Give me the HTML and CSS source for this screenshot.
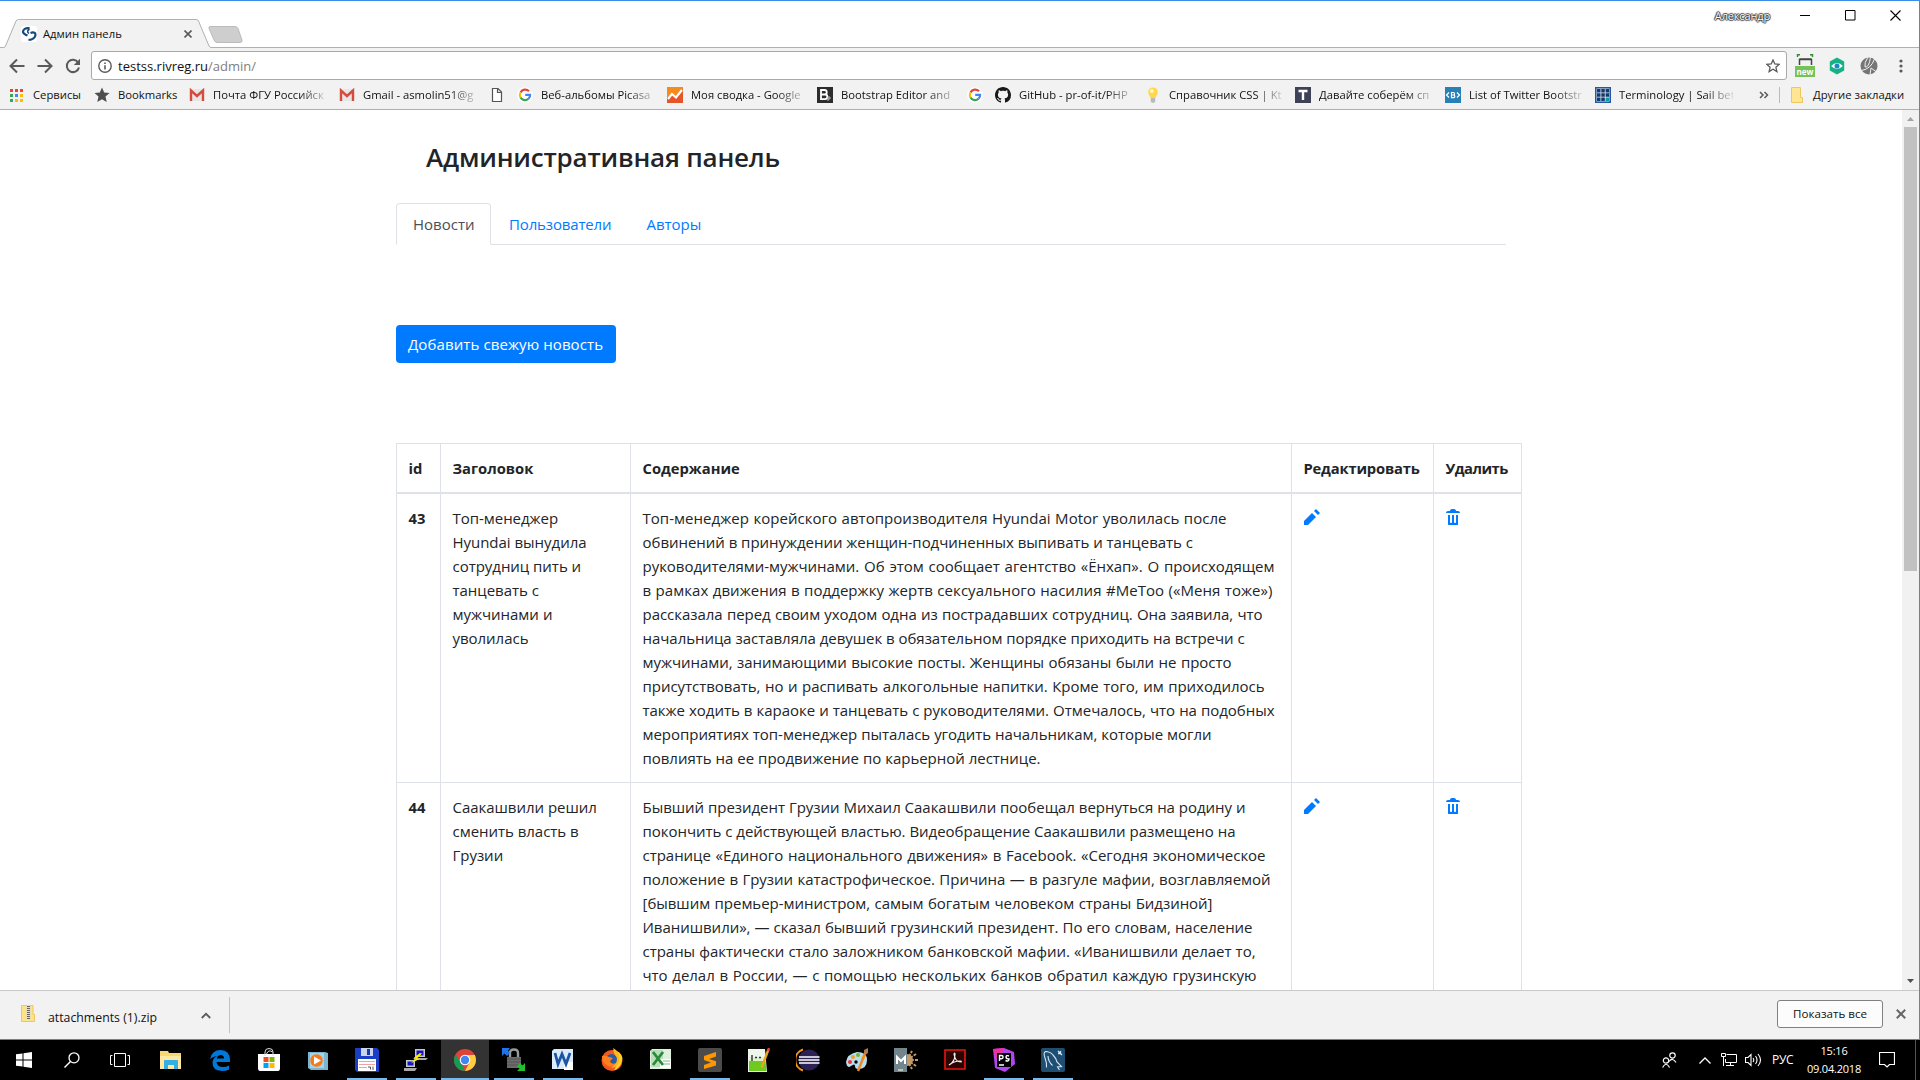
FILE: index.html
```html
<!DOCTYPE html>
<html lang="ru">
<head>
<meta charset="utf-8">
<title>Админ панель</title>
<link rel="stylesheet" href="styles.css">
</head>
<body>
<div class="window">
  <header class="tabstrip">
    <div class="tab">
      <svg class="tab-shape" width="212" height="29"><path d="M0 28.500H3.500Q5 28.500 5.500 27L16 2Q17 .5 18.500 .5H196Q198 .5 198.500 2L209 27Q209.500 28.500 212 28.500V29H0z" fill="#f2f2f2"/><path d="M0 28.500H3.500Q5 28.500 5.500 27L16 2Q17 .5 18.500 .5H196Q198 .5 198.500 2L209 27Q209.500 28.500 212 28.500" fill="none" stroke="#b0b0b0"/></svg>
      <svg class="fav" width="16" height="16" viewBox="0 0 16 16"><rect width="16" height="16" rx="2" fill="#fff"/><path d="M8.500 2.200C4.500 1.500 2 3.500 2 5.800S4.500 8.500 6.500 9.500M7.500 14c4.500-.5 7-3 7-5.300S12 6 9.500 7" fill="none" stroke="#174a7c" stroke-width="2.200"/><path d="M8.500 3C6.200 4.500 6 6 8 7.500" fill="none" stroke="#174a7c" stroke-width="1.500"/></svg>
      <span class="tab-title">Админ панель</span>
      <svg class="tab-close" width="8" height="8"><path d="M.5 .5l7 7M7.500 .5l-7 7" stroke="#5a5a5a" stroke-width="1.600"/></svg>
    </div>
    <svg class="newtab" width="36" height="18"><path d="M2 .5H27Q29 .5 30 2.500L34 14Q34.500 16.500 32 16.500H9Q7 16.500 6 14L1 2.500Q.5 .5 2 .5z" fill="#cecece" stroke="#bbb"/></svg>
    <span class="user">Александр</span>
    <div class="winbtns">
      <svg width="11" height="11"><path d="M0 5.500h10" stroke="#000"/></svg>
      <svg width="11" height="11"><path d="M.5 .5h9.500v9.500h-9.500z" fill="none" stroke="#000"/></svg>
      <svg width="11" height="11"><path d="M.5 .5l10 10M10.500 .5l-10 10" stroke="#000" stroke-width="1.100"/></svg>
    </div>
  </header>

  <div class="toolbar">
    <svg width="16" height="16" viewBox="0 0 16 16"><path d="M15.500 8H2M8 1.500L1.500 8 8 14.500" class="nav-i"/></svg>
    <svg width="16" height="16" viewBox="0 0 16 16"><path d="M.5 8H14M8 1.500L14.500 8 8 14.500" class="nav-i"/></svg>
    <svg width="16" height="16" viewBox="0 0 16 16"><path d="M13.200 4.500A6.200 6.200 0 1 0 14 9.500" class="nav-i"/><path d="M15 .8V7H8.800z" fill="#5a5a5a"/></svg>
    <div class="omnibox">
      <svg width="14" height="14" viewBox="0 0 14 14"><circle cx="7" cy="7" r="6.200" fill="none" stroke="#5a5a5a" stroke-width="1.400"/><path d="M7 6.200v4.300M7 3.400v1.500" stroke="#5a5a5a" stroke-width="1.600"/></svg>
      <span class="url">testss.rivreg.ru<span class="path">/admin/</span></span>
      <svg class="star" width="14" height="14" viewBox="0 0 14 14"><path d="M7 1l1.800 4 4.400.4-3.300 2.900 1 4.300L7 10.300l-3.900 2.300 1-4.300L.8 5.400 5.200 5z" fill="none" stroke="#5a5a5a" stroke-width="1.300"/></svg>
    </div>
    <div class="exts">
      <div class="ext-new"><svg width="18" height="11"><path d="M1.500 3V.8H4M14 .8h2.500V3" fill="none" stroke="#2e8b2e" stroke-width="1.400"/><path d="M3.500 11V5.500h12V11M3.500 5h12" fill="none" stroke="#444" stroke-width="1.500"/></svg><b>new</b></div>
      <svg width="18" height="18" viewBox="0 0 18 20"><path d="M9 .5L17 5v10l-8 4.500L1 15V5z" fill="#16b285"/><path d="M2.500 10Q9 3.500 15.500 10 9 16.500 2.500 10z" fill="#fff"/><circle cx="9" cy="10" r="2.800" fill="#1c86c9"/></svg>
      <svg width="18" height="18" viewBox="0 0 18 18"><circle cx="9" cy="9" r="8.500" fill="#757575"/><path d="M8 0Q4 6 5 10q4 1 5.500-10M1.500 13.500Q11 12 14.500 2M10 18l1-7 5.500 4" fill="none" stroke="#f2f2f2"/></svg>
      <svg width="4" height="16"><g fill="#5a5a5a"><circle cx="2" cy="3" r="1.600"/><circle cx="2" cy="8" r="1.600"/><circle cx="2" cy="13" r="1.600"/></g></svg>
    </div>
  </div>

  <nav class="bookmarks">
    <div class="bm apps"><svg width="16" height="16"><path d="M2 2h3v3H2zM7 2h3v3H7zM12 2h3v3h-3z" fill="#ea4335"/><path d="M2 7h3v3H2z" fill="#34a853"/><path d="M7 7h3v3H7z" fill="#4285f4"/><path d="M12 7h3v3h-3zM7 12h3v3H7zM12 12h3v3h-3z" fill="#fbbc05"/><path d="M2 12h3v3H2z" fill="#34a853"/></svg><span>Сервисы</span></div>
    <div class="bm marks"><svg width="16" height="16" viewBox="0 0 16 16"><path d="M8 .5l2.200 5 5.300.5-4 3.600 1.200 5.400L8 12.200 3.300 15l1.200-5.400L.5 6l5.300-.5z" fill="#4e4e4e"/></svg><span>Bookmarks</span></div>
    <div class="bm"><svg width="16" height="16"><path d="M1 2h14v12H1z" fill="#e6e6e6"/><path d="M2 14V3.500l6 5.500 6-5.500V14" fill="none" stroke="#d54b3d" stroke-width="2.400"/></svg><span class="fade">Почта ФГУ Российск</span></div>
    <div class="bm"><svg width="16" height="16"><path d="M1 2h14v12H1z" fill="#e6e6e6"/><path d="M2 14V3.500l6 5.500 6-5.500V14" fill="none" stroke="#d54b3d" stroke-width="2.400"/></svg><span class="fade">Gmail - asmolin51@g</span></div>
    <div class="bm icon-only"><svg width="16" height="16"><path d="M3.500 1.500h5.500l3.500 3.500v9.500h-9zM8.500 1.500v4h4" fill="#fff" stroke="#555" stroke-width="1.200"/></svg></div>
    <div class="bm"><svg width="16" height="16" viewBox="0 0 16 16"><use href="#g"/></svg><span class="fade">Веб-альбомы Picasa</span></div>
    <div class="bm"><svg width="16" height="16"><path d="M0 0h16v16H0z" fill="#f58a1f"/><path d="M0 16v-5l5-4 4 3 7-8v14z" fill="#e4562a"/><path d="M1 12l4-5 4 3.500L15 3" fill="none" stroke="#fff" stroke-width="2.200"/></svg><span class="fade">Моя сводка - Google</span></div>
    <div class="bm"><svg width="16" height="16"><path d="M0 0h16v16H0z" fill="#2c2c2e"/><path d="M4 3h3.500a2 2 0 0 1 0 4.500H4zM4 7.500h4a2.300 2.300 0 0 1 0 4.700H4z" fill="none" stroke="#fff" stroke-width="1.800"/><path d="M11 14v-4h2v2h-2" fill="none" stroke="#bbb"/></svg><span class="fade">Bootstrap Editor and</span></div>
    <div class="bm icon-only"><svg width="16" height="16" viewBox="0 0 16 16"><g id="g"><circle cx="8" cy="8" r="7.800" fill="#fff"/><g fill="none" stroke-width="2.200"><path d="M12 4.300A5.200 5.200 0 0 0 3.500 5.500" stroke="#ea4335"/><path d="M3.500 5.500a5.200 5.200 0 0 0 0 5" stroke="#fbbc05"/><path d="M3.500 10.500a5.200 5.200 0 0 0 8 1.300" stroke="#34a853"/><path d="M11.500 11.800Q13.300 10 13.100 7.900H8.200" stroke="#4285f4"/></g></g></svg></div>
    <div class="bm"><svg width="16" height="16" viewBox="0 0 16 16"><path d="M8 0C3.580 0 0 3.580 0 8c0 3.540 2.290 6.530 5.470 7.590.4.070.55-.17.55-.38 0-.19-.01-.82-.01-1.490-2.010.37-2.530-.49-2.690-.94-.09-.23-.48-.94-.82-1.130-.28-.15-.68-.52-.01-.53.63-.01 1.080.58 1.230.82.72 1.210 1.870.87 2.330.66.070-.52.28-.87.51-1.070-1.780-.2-3.640-.89-3.640-3.950 0-.87.31-1.590.82-2.150-.08-.2-.36-1.020.08-2.120 0 0 .67-.21 2.200.82.64-.18 1.320-.27 2-.27s1.360.09 2 .27c1.530-1.040 2.200-.82 2.200-.82.44 1.100.16 1.920.08 2.120.51.56.82 1.270.82 2.150 0 3.070-1.870 3.750-3.650 3.950.29.25.54.73.54 1.480 0 1.070-.01 1.930-.01 2.200 0 .21.15.46.55.38A8.010 8.010 0 0 0 16 8c0-4.420-3.580-8-8-8z" fill="#191717"/></svg><span class="fade">GitHub - pr-of-it/PHP</span></div>
    <div class="bm"><svg width="16" height="16"><path d="M8 .5c3 0 4.800 2 4.800 4.700 0 2.500-2 3.400-2.300 5.800h-5C5.200 8.600 3.200 7.700 3.200 5.200 3.200 2.500 5 .5 8 .5z" fill="#ffd84a"/><circle cx="6.800" cy="4" r="2" fill="#fff6c0"/><path d="M5.800 11h4.400v3.500l-1 1.200H6.800l-1-1.200z" fill="#b9b9b9"/></svg><span class="fade">Справочник CSS | Kt</span></div>
    <div class="bm"><svg width="16" height="16"><path d="M0 0h16v16H0z" fill="#3d4257"/><path d="M3.500 4h9M8 4v9" stroke="#fff" stroke-width="2.400"/></svg><span class="fade">Давайте соберём сп</span></div>
    <div class="bm"><svg width="16" height="16"><path d="M0 0h16v16H0z" fill="#2980b9"/><path d="M4 5.500L1.500 8 4 10.500M12 5.500L14.500 8 12 10.500M6.500 5.500h1.800a1 1 0 0 1 0 2.500H6.500zM6.500 8h2a1 1 0 0 1 0 2.600h-2z" fill="none" stroke="#fff" stroke-width="1.200"/></svg><span class="fade">List of Twitter Bootstr</span></div>
    <div class="bm"><svg width="16" height="16"><path d="M0 0h16v16H0z" fill="#2457a8"/><path d="M1.500 1.500h13v13h-13z" fill="#dfe6ee"/><path d="M2 2h3.500v3.500H2zM6.300 2h3.500v3.500H6.300zM10.600 2h3.500v3.500h-3.500zM2 6.300h3.500v3.500H2zM6.300 6.300h3.500v3.500H6.300zM10.600 6.300h3.500v3.500h-3.500zM2 10.600h3.500v3.500H2zM6.300 10.600h3.500v3.500H6.300z" fill="#123a6b"/><path d="M10.600 10.600h3.500v3.500h-3.500z" fill="#109a9a"/></svg><span class="fade">Terminology | Sail bet</span></div>
    <svg class="more" width="10" height="8"><path d="M1 1l3 3-3 3M5.500 1l3 3-3 3" fill="none" stroke="#5a5a5a" stroke-width="1.500"/></svg>
    <i class="bm-sep"></i>
    <div class="bm other"><svg width="16" height="16"><path d="M2.500 .5h9v10h2v5H2.500z" fill="#ffe693" stroke="#efc75c"/></svg><span>Другие закладки</span></div>
  </nav>

  <div class="viewport">
    <main class="page">
      <h1>Административная панель</h1>
      <ul class="tabs"><li class="active">Новости</li><li class="users">Пользователи</li><li>Авторы</li></ul>
      <a class="btn">Добавить свежую новость</a>
      <table>
        <colgroup><col class="c-id"><col class="c-title"><col class="c-text"><col class="c-edit"><col class="c-del"></colgroup>
        <thead><tr><th>id</th><th>Заголовок</th><th>Содержание</th><th class="h-edit">Редактировать</th><th class="h-del">Удалить</th></tr></thead>
        <tbody>
          <tr>
            <th>43</th>
            <td class="lines title-43"><span>Топ-менеджер</span><span>Hyundai вынудила</span><span>сотрудниц пить и</span><span>танцевать с</span><span>мужчинами и</span><span>уволилась</span></td>
            <td class="lines text-43"><span>Топ-менеджер корейского автопроизводителя Hyundai Motor уволилась после</span><span>обвинений в принуждении женщин-подчиненных выпивать и танцевать с</span><span>руководителями-мужчинами. Об этом сообщает агентство «Ёнхап». О происходящем</span><span>в рамках движения в поддержку жертв сексуального насилия #MeToo («Меня тоже»)</span><span>рассказала перед своим уходом одна из пострадавших сотрудниц. Она заявила, что</span><span>начальница заставляла девушек в обязательном порядке приходить на встречи с</span><span>мужчинами, занимающими высокие посты. Женщины обязаны были не просто</span><span>присутствовать, но и распивать алкогольные напитки. Кроме того, им приходилось</span><span>также ходить в караоке и танцевать с руководителями. Отмечалось, что на подобных</span><span>мероприятиях топ-менеджер пыталась угодить начальникам, которые могли</span><span>повлиять на ее продвижение по карьерной лестнице.</span></td>
            <td><svg class="act" width="16" height="16" viewBox="0 0 8 8"><path id="pencil" d="M6 0l-1 1 2 2 1-1-2-2zm-2 2l-4 4v2h2l4-4-2-2z" fill="#007bff"/></svg></td>
            <td><svg class="act" width="16" height="16" viewBox="0 0 8 8"><path id="trash" d="M3 0c-.55 0-1 .45-1 1h-1c-.55 0-1 .45-1 1h7c0-.55-.45-1-1-1h-1c0-.55-.45-1-1-1h-1zm-2 3v4.810c0 .110.080.190.190.190h4.630c.110 0 .190-.080.190-.190v-4.810h-1v3.500c0 .280-.220.500-.500.500s-.500-.220-.500-.500v-3.500h-1v3.500c0 .280-.220.500-.500.500s-.500-.220-.500-.500v-3.500h-1z" fill="#007bff"/></svg></td>
          </tr>
          <tr>
            <th>44</th>
            <td class="lines title-44"><span>Саакашвили решил</span><span>сменить власть в</span><span>Грузии</span></td>
            <td class="lines text-44"><span>Бывший президент Грузии Михаил Саакашвили пообещал вернуться на родину и</span><span>покончить с действующей властью. Видеобращение Саакашвили размещено на</span><span>странице «Единого национального движения» в Facebook. «Сегодня экономическое</span><span>положение в Грузии катастрофическое. Причина — в разгуле мафии, возглавляемой</span><span>[бывшим премьер-министром, самым богатым человеком страны Бидзиной]</span><span>Иванишвили», — сказал бывший грузинский президент. По его словам, население</span><span>страны фактически стало заложником банковской мафии. «Иванишвили делает то,</span><span>что делал в России, — с помощью нескольких банков обратил каждую грузинскую</span></td>
            <td><svg class="act" width="16" height="16" viewBox="0 0 8 8"><use href="#pencil"/></svg></td>
            <td><svg class="act" width="16" height="16" viewBox="0 0 8 8"><use href="#trash"/></svg></td>
          </tr>
        </tbody>
      </table>
    </main>
    <div class="scroll">
      <svg width="7" height="4"><path d="M0 4L3.500 0 7 4z" fill="#a3a3a3"/></svg>
      <div class="thumb"></div>
      <svg class="down" width="7" height="4"><path d="M0 0h7L3.500 4z" fill="#505050"/></svg>
    </div>
  </div>

  <footer class="shelf">
    <svg class="zip" width="14" height="17"><path d="M.5 .5h11.500v9h1.500v7H.5z" fill="#fde388" stroke="#efc75c"/><path d="M5.500 0h4v14h-4z" fill="#d8d8d8"/><path d="M6 1.500h3M6 3.500h3M6 5.500h3M6 7.500h3M6 9.500h3M6 11.500h3M6 13.500h3" stroke="#666"/></svg>
    <span class="file">attachments (1).zip</span>
    <svg class="up" width="10" height="7"><path d="M.8 6L5 1.800 9.200 6" fill="none" stroke="#5a5a5a" stroke-width="1.800"/></svg>
    <i class="shelf-sep"></i>
    <span class="all">Показать все</span>
    <svg class="x" width="10" height="10"><path d="M.8 .8l8.400 8.400M9.200 .8L.8 9.200" stroke="#666" stroke-width="2"/></svg>
  </footer>
</div>

<div class="taskbar">
  <div class="sys">
    <div><svg width="16" height="16"><path d="M0 2.300L6.500 1.400V7.500H0zM7.500 1.200L16 0v7.500H7.500zM0 8.500h6.500v6.100L0 13.700zM7.500 8.500H16V16l-8.500-1.200z" fill="#fff"/></svg></div>
    <div><svg width="16" height="16"><circle cx="10" cy="5.800" r="5" fill="none" stroke="#fff" stroke-width="1.300"/><path d="M6.500 9.500L.5 15.500" stroke="#fff" stroke-width="1.400"/></svg></div>
    <div><svg width="20" height="14"><path d="M4.500 .5h11v13h-11zM2.500 2.500h-2v9h2M17.500 2.500h2v9h-2" fill="none" stroke="#fff"/></svg></div>
  </div>
  <div class="app"><svg width="24" height="24"><path d="M1 3h8l1 2h12v16H1z" fill="#f8d775"/><path d="M1 8h21v13H1z" fill="#ffe9a2"/><path d="M5 21v-8q0-1 1-1h12q1 0 1 1v8h-4v-4H9v4z" fill="#35aee2"/></svg></div>
  <div class="app"><svg width="24" height="24"><path d="M2 11Q4 2 12.500 2 22 2.500 22 12v2H8.500q.5 5 6.500 5 3.500 0 6-1.500v4Q18 23 14 23 4 22.500 4.500 14 5 10 9 8q-4 .5-7 3zM8.700 10.500H16Q16 7 12.800 7T8.700 10.500z" fill="#0078d7"/></svg></div>
  <div class="app"><svg width="24" height="24"><path d="M1 6h22v14q0 3-2 3H3q-2 0-2-3z" fill="#fff"/><path d="M8 8V4q0-3.500 4-3.500t4 3.500v4M9.500 6q2-5 6-2" fill="none" stroke="#ddd"/><path d="M6.500 9h5v5h-5z" fill="#f04e1f"/><path d="M12.500 9h5v5h-5z" fill="#7db700"/><path d="M6.500 15h5v5h-5z" fill="#00a1f1"/><path d="M12.500 15h5v5h-5z" fill="#ffb900"/></svg></div>
  <div class="app"><svg width="24" height="24"><path d="M2 4h17l3 1v17H5l-3-2z" fill="#7bb6cf"/><path d="M4 5h14v15H4z" fill="#a5d2e4"/><circle cx="10.500" cy="12.500" r="6.200" fill="#f47a20"/><path d="M8 8.500l7 4-7 4z" fill="#fff"/></svg></div>
  <div class="app on"><svg width="24" height="24"><path d="M0 0h22l2 2v22H2l-2-2z" fill="#1a3fc4"/><path d="M6 0h12v8H6z" fill="#c9d4ee"/><path d="M12 1h3v6h-3z" fill="#1638a8"/><path d="M3 11h18v12H3z" fill="#fff"/><path d="M4 13.500h16M4 16.500h16M4 19.500h8" stroke="#f0a0a0"/><path d="M13 19h2.500v2.500M18 18.500v3.500" fill="none" stroke="#555"/></svg></div>
  <div class="app on"><svg width="24" height="24"><path d="M11 1h10v8H11zM2 12h9v7H2z" fill="#c8c8c8"/><path d="M12.500 2.500h7v5h-7zM3.500 13.500h6v4h-6z" fill="#1414c8"/><path d="M10 10h14l-2 2H10zM0 20h13l-2 3H0z" fill="#a8a8a8"/><path d="M16 5l-7 5.500h3.500l-6 5 10-5H13l5-5z" fill="#ffee00"/></svg></div>
  <div class="app on active"><svg width="24" height="24"><circle cx="12" cy="12" r="11" fill="#db4437"/><path d="M2.500 6.500L9 17l3 6A11 11 0 0 1 2.500 6.500z" fill="#0f9d58"/><path d="M12 7h9.800A11 11 0 0 1 12 23l4.500-8.500z" fill="#ffcd40"/><circle cx="12" cy="12" r="5.300" fill="#fff"/><circle cx="12" cy="12" r="4.200" fill="#4285f4"/></svg></div>
  <div class="app on"><svg width="24" height="24"><path d="M8 10V5q0-3.500 4-3.500t4 3.500v5" fill="none" stroke="#999" stroke-width="2.400"/><path d="M5 9h14v11H5z" fill="#6c6c6c"/><path d="M5 11h14M5 14h14M5 17h14" stroke="#555"/><path d="M0 0h8L6 2.500 8 5 5 8 2.500 5.500 0 8z" fill="#1f74e8"/><path d="M23 15v8h-8l2.500-2.500L15 18l3-3 2.500 2.500z" fill="#1fc22c"/></svg></div>
  <div class="app on"><svg width="24" height="24"><path d="M3 1h19v20H1V3z" fill="#dcebfa"/><path d="M13 14h9v8h-9z" fill="#fff"/><path d="M4 5l3 11 4-10 4 10 4-11" fill="none" stroke="#1c54a6" stroke-width="2.800"/></svg></div>
  <div class="app"><svg width="24" height="24"><circle cx="12" cy="12.500" r="10.500" fill="#f5581c"/><path d="M13 2q8 1 9.500 8-1 10-9 12.500Q20 15 13 2z" fill="#ffcf25"/><path d="M13 0q7 3 6 12 0 7-8 8 7-5 2-20z" fill="#ffb51f"/><circle cx="11.500" cy="11.500" r="5.500" fill="#255ba8"/><path d="M2 8q4-1 7 1l4 1-3 3q1 4 6 2-3 5-8 3-6-3-6-10z" fill="#ff7f1c"/></svg></div>
  <div class="app"><svg width="24" height="24"><path d="M3 1h19v20H1V3z" fill="#dff0df"/><path d="M2 2h12v17H2z" fill="#b9dfb9"/><path d="M11 11h11v9H11z" fill="#fff"/><path d="M4 4l10 13M14 4L4 17" stroke="#2b8a3c" stroke-width="2.800"/><path d="M14 13h7M14 16h7" stroke="#7fb987"/></svg></div>
  <div class="app on"><svg width="24" height="24"><rect width="24" height="24" rx="2" fill="#4b4b4b"/><path d="M18 4v4.500L11 11l7 2.300v4.200L6 21v-4l7-2.500L6 12V8z" fill="#ff9800"/></svg></div>
  <div class="app"><svg width="24" height="24"><path d="M1 1h17l2 23H1z" fill="#eef5ea"/><path d="M2 13h16.500l1 10H2z" fill="#6ccb1e"/><path d="M2 9h16v4H2z" fill="#dff2cf"/><path d="M5 7v6M8 9.500h2M12 9.500h2" stroke="#333" stroke-width="1.400"/><path d="M21.500 1.500l-7 18" stroke="#e8a61c" stroke-width="2.400"/><path d="M22 0l-1 3" stroke="#d44" stroke-width="2.400"/></svg></div>
  <div class="app"><svg width="24" height="24"><path d="M7 1.500A11 11 0 0 0 7 22.500" fill="none" stroke="#f7941e" stroke-width="2"/><circle cx="13" cy="12" r="10.500" fill="#2c2255"/><path d="M3 9h20.500M2.500 12h21M3 15h20.500" stroke="#fff" stroke-width="1.700"/></svg></div>
  <div class="app"><svg width="24" height="24"><path d="M1 14Q2 6 12 4q10 0 10 8 0 9-9 9-3 0-3-3t-4 0-5-4z" fill="#b9dcef"/><circle cx="5" cy="14" r="2" fill="#e33"/><circle cx="8" cy="9" r="2" fill="#f39a2a"/><circle cx="13" cy="7" r="2" fill="#6cb82e"/><circle cx="18" cy="10" r="2" fill="#fbd21c"/><circle cx="11" cy="14" r="1.700" fill="#000"/><path d="M21 3l-8 20" stroke="#e98a2f" stroke-width="2.500"/><path d="M19 2l4-2v5l-3 2z" fill="#b57a4c"/></svg></div>
  <div class="app"><svg width="24" height="24"><circle cx="13" cy="12" r="6" fill="#c39a66"/><path d="M13 12l5-9M13 12l9-6M13 12h11M13 12l9 6M13 12l5 9" stroke="#c39a66" stroke-width="2"/><circle cx="13" cy="12" r="7.500" fill="none" stroke="#000" stroke-width="1.200"/><path d="M0 0h13v24H0z" fill="#71858a"/><path d="M3 16V9l4 4 4-4v7" fill="none" stroke="#fff" stroke-width="2"/><path d="M4 22h5" stroke="#fff"/></svg></div>
  <div class="app"><svg width="24" height="24"><path d="M2 2h20v19H2z" fill="#2a0303" stroke="#e8170c" stroke-width="1.600"/><path d="M6 17Q12 14 12 6q0-2-1 0 1 8 7 8 1-1-1-1-6 0-11 4z" fill="none" stroke="#eee" stroke-width="1.200"/></svg></div>
  <div class="app on"><svg width="24" height="24"><path d="M1 1l11-1 10 4 1 12-10 8-10-4z" fill="#b345f1"/><path d="M1 1l11-1-6 16z" fill="#f02fa0"/><path d="M5 5h14v14H5z" fill="#000"/><path d="M7.500 13V7.500h2a1.500 1.500 0 0 1 0 3.200h-2M17 8q-3-1-3 1t3 2q0 3-3.500 1.500M7 17h5" fill="none" stroke="#fff" stroke-width="1.400"/></svg></div>
  <div class="app on"><svg width="24" height="24"><rect width="24" height="24" rx="2" fill="#1f4e73"/><path d="M5.500 19.500Q6 15 4 10 2 4.500 4.500 3.500 9 3.500 12 7q3 3 4 7l4.500 4.500-4 .5 2 3M7 8q0 5 4.500 9.500" fill="none" stroke="#d6e6f2" stroke-width="1.100"/><path d="M17 3l4 4M19.500 3v2.500H17" stroke="#d6e6f2" stroke-width="1.300" fill="none"/></svg></div>

  <div class="tray">
    <svg class="t-people" width="15" height="16"><g fill="none" stroke="#fff" stroke-width="1.200"><circle cx="10.500" cy="3.500" r="2.700"/><path d="M7 9.500q3.500-4.500 7 1"/><circle cx="4" cy="8.500" r="2.700"/><path d="M.6 15.500q3.400-6.500 7 0"/></g></svg>
    <svg class="t-up" width="12" height="7"><path d="M.5 6.500L6 1l5.500 5.500" fill="none" stroke="#fff" stroke-width="1.300"/></svg>
    <svg class="t-net" width="16" height="14"><path d="M5.500 1.500h10v8h-11V6M9.500 9.500v3M5 12.500h8M.5 .5h4v3h-4zM2.500 4v9" fill="none" stroke="#fff"/></svg>
    <svg class="t-vol" width="17" height="14"><path d="M.5 4.500h2.500l3-3v11l-3-3H.5zM8 5q1.500 2 0 4M10.500 3q3 4 0 8M13 1q5 6 0 12" fill="none" stroke="#fff" stroke-width="1.100"/></svg>
    <span class="t-lang">РУС</span>
    <div class="t-clock"><span>15:16</span><span>09.04.2018</span></div>
    <svg class="t-note" width="16" height="16"><path d="M.5 .5h15v12h-5l-2.500 2.500-2.500-2.500h-5z" fill="none" stroke="#fff" stroke-width="1.200"/></svg>
    <i class="t-edge"></i>
  </div>
</div>
</body>
</html>
```
FILE: styles.css
```css
*{box-sizing:border-box}
body{margin:0;width:1920px;height:1080px;overflow:hidden;background:#fff;font-family:"Open Sans","Noto Sans",sans-serif;color:#111;white-space:nowrap}
svg{flex:none;display:block}
.window{height:1040px;border:1px solid #3a8ee6;border-left:0;font-size:11.25px}
.nav-i{fill:none;stroke:#5a5a5a;stroke-width:2}

.tabstrip{height:47px;display:flex;border-bottom:1px solid #b0b0b0;background:#fff}
.tab{position:relative;display:flex;width:208px;height:29px;margin-top:18px;padding-left:21px}
.tab-shape{position:absolute;left:0;top:0}
.fav{position:relative;margin-top:7px}
.tab-title{position:relative;width:141px;padding-left:6px;line-height:29px}
.tab-close{position:relative;margin:11px 0 0 6px}
.newtab{margin-top:25px}
.user{margin:7px 0 0 auto;font-size:11px;line-height:16px;letter-spacing:-.15px;color:#fff;text-shadow:0 0 1px #222,1px 0 1px #444,-1px 0 1px #444,0 1px 1px #444,0 -1px 1px #444}
.winbtns{display:flex;gap:34px;margin:9px 18px 0 30px}

.toolbar{height:35px;display:flex;align-items:center;background:#f2f2f2;padding-left:9px;gap:12px}
.omnibox{display:flex;align-items:center;width:1696px;height:29px;margin:0 0 0 -2px;border:1px solid #a9a9a9;border-radius:3px;background:#fff;padding:0 6px}
.url{font-size:13px;letter-spacing:0;margin-left:6px;line-height:24px;flex:1}
.path{color:#808080}
.exts{display:flex;align-items:center;gap:14px;margin-left:-4px}
.ext-new{width:20px;height:23px;display:flex;flex-direction:column;align-items:center;margin-right:-1px}
.ext-new b{width:20px;height:13px;margin-top:1px;background:#74c258;color:#fff;font-size:8px;line-height:11px;text-align:center}
.exts>svg:last-child{margin-left:7px}

.bookmarks{height:27px;display:flex;align-items:center;background:#f2f2f2;border-bottom:1px solid #b0b0b0;padding:0 0 3px 8px}
.bm{width:150px;display:flex;align-items:center;gap:8px}
.bm span{line-height:20px}
.apps{width:86px;gap:9px}
.marks{width:95px}
.icon-only{width:28px}
.fade{width:114px;margin-right:-2px;-webkit-mask-image:linear-gradient(90deg,#000 86px,transparent 118px);mask-image:linear-gradient(90deg,#000 86px,transparent 118px)}
.more{margin-left:14px}
.bm-sep{width:1px;height:16px;background:#bbb;margin:0 9px 0 10px}
.other{width:auto}

.viewport{height:880px;display:flex;overflow:hidden;background:#fff}
.page{flex:1;padding-left:396px;font-size:15px;line-height:24px;color:#212529}
h1{margin:30px 0 0 30px;font-size:26px;line-height:34px;font-weight:600;letter-spacing:-.2px}
.tabs{display:flex;list-style:none;width:1110px;height:42px;margin:29px 0 0;padding:0;border-bottom:1px solid #dee2e6;color:#007bff}
.tabs li{height:42px;padding:8px 16px;border:1px solid transparent;border-radius:4px 4px 0 0}
.tabs .users{padding:8px 17px;letter-spacing:-.15px}
.tabs .active{width:95px;background:#fff;border-color:#dee2e6 #dee2e6 #fff;color:#495057}
.btn{display:block;width:220px;height:38px;margin-top:80px;padding:7px 12px;border-radius:4px;background:#007bff;color:#fff;letter-spacing:.1px}
table{width:1126px;margin-top:80px;table-layout:fixed;border-collapse:collapse}
.c-id{width:44px}
.c-title{width:190px}
.c-text{width:661px}
.c-edit{width:142px}
.c-del{width:88px}
th,td{border:1px solid #dee2e6;padding:12px 0 12px 11.500px;text-align:left;vertical-align:top}
th{font-weight:700;font-size:14.75px}
thead th{border-bottom-width:2px}
.h-edit{letter-spacing:-.18px}
.h-del{letter-spacing:-.5px}
.act{margin-top:3px}
.lines span{display:block;text-align:justify;text-align-last:justify;letter-spacing:-.03px}
.title-43 span:nth-child(1){width:109px}
.title-43 span:nth-child(2){width:134px}
.title-43 span:nth-child(3){width:128px}
.title-43 span:nth-child(4){width:86px}
.title-43 span:nth-child(5){width:100px}
.title-44 span:nth-child(1){width:144px}
.title-44 span:nth-child(2){width:125px}
.text-43 span:nth-child(1){width:584px;letter-spacing:.03px}
.text-43 span:nth-child(2){width:550px}
.text-43 span:nth-child(3){width:632px}
.text-43 span:nth-child(4){width:630px;letter-spacing:.05px}
.text-43 span:nth-child(5){width:620px}
.text-43 span:nth-child(6){width:602px}
.text-43 span:nth-child(7){width:589px}
.text-43 span:nth-child(8){width:622px}
.text-43 span:nth-child(9){width:632px}
.text-43 span:nth-child(10){width:569px}
.text-43 span:nth-child(11){width:398px}
.text-44 span:nth-child(1){width:603px}
.text-44 span:nth-child(2){width:593px}
.text-44 span:nth-child(3){width:623px}
.text-44 span:nth-child(4){width:628px}
.text-44 span:nth-child(5){width:570px}
.text-44 span:nth-child(6){width:610px}
.text-44 span:nth-child(7){width:613px}
.text-44 span:nth-child(8){width:614px}

.scroll{width:17px;background:#f1f1f1;display:flex;flex-direction:column;align-items:center;padding-top:7px}
.thumb{width:13px;height:444px;margin-top:6px;background:#c1c1c1}
.down{margin:auto 0 7px}

.shelf{height:49px;display:flex;align-items:center;background:#f2f2f2;border-top:1px solid #c8c8c8}
.zip{margin:-3px 0 0 21px}
.file{width:153px;margin:6px 0 0 13px;font-size:12.3px;line-height:18px}
.shelf-sep{width:1px;height:36px;background:#c3c3c3;margin-left:18px}
.all{width:106px;height:28px;margin:-2px 13px 0 auto;border:1px solid #808080;border-radius:3px;background:#fcfcfc;font-size:11.6px;line-height:26px;text-align:center}
.x{margin:-2px 13px 0 0}

.taskbar{height:40px;display:flex;background:#000;color:#fff}
.sys{display:flex;width:147px}
.sys div{width:48px;display:flex;align-items:center;justify-content:center}
.app{width:48px;height:40px;margin-right:1px;display:flex;align-items:center;justify-content:center}
.on{background:linear-gradient(#76b9ed,#76b9ed) 4px 38px/40px 2px no-repeat}
.active.app{background:linear-gradient(#76b9ed,#76b9ed) 0 38px/48px 2px no-repeat #333}
.tray{display:flex;align-items:center;margin-left:auto;padding-right:4px}
.t-up{margin-left:22px}
.t-net{margin-left:10px}
.t-vol{margin-left:8px}
.t-lang{margin:-2px 0 0 10px;font-size:12px;width:23px;letter-spacing:-.3px}
.t-clock{width:56px;margin-left:11px;display:flex;flex-direction:column;align-items:center;font-size:11px;line-height:18px;letter-spacing:-.2px}
.t-note{margin-left:17px}
.t-edge{width:1px;height:40px;margin-left:20px;background:#555}
```
